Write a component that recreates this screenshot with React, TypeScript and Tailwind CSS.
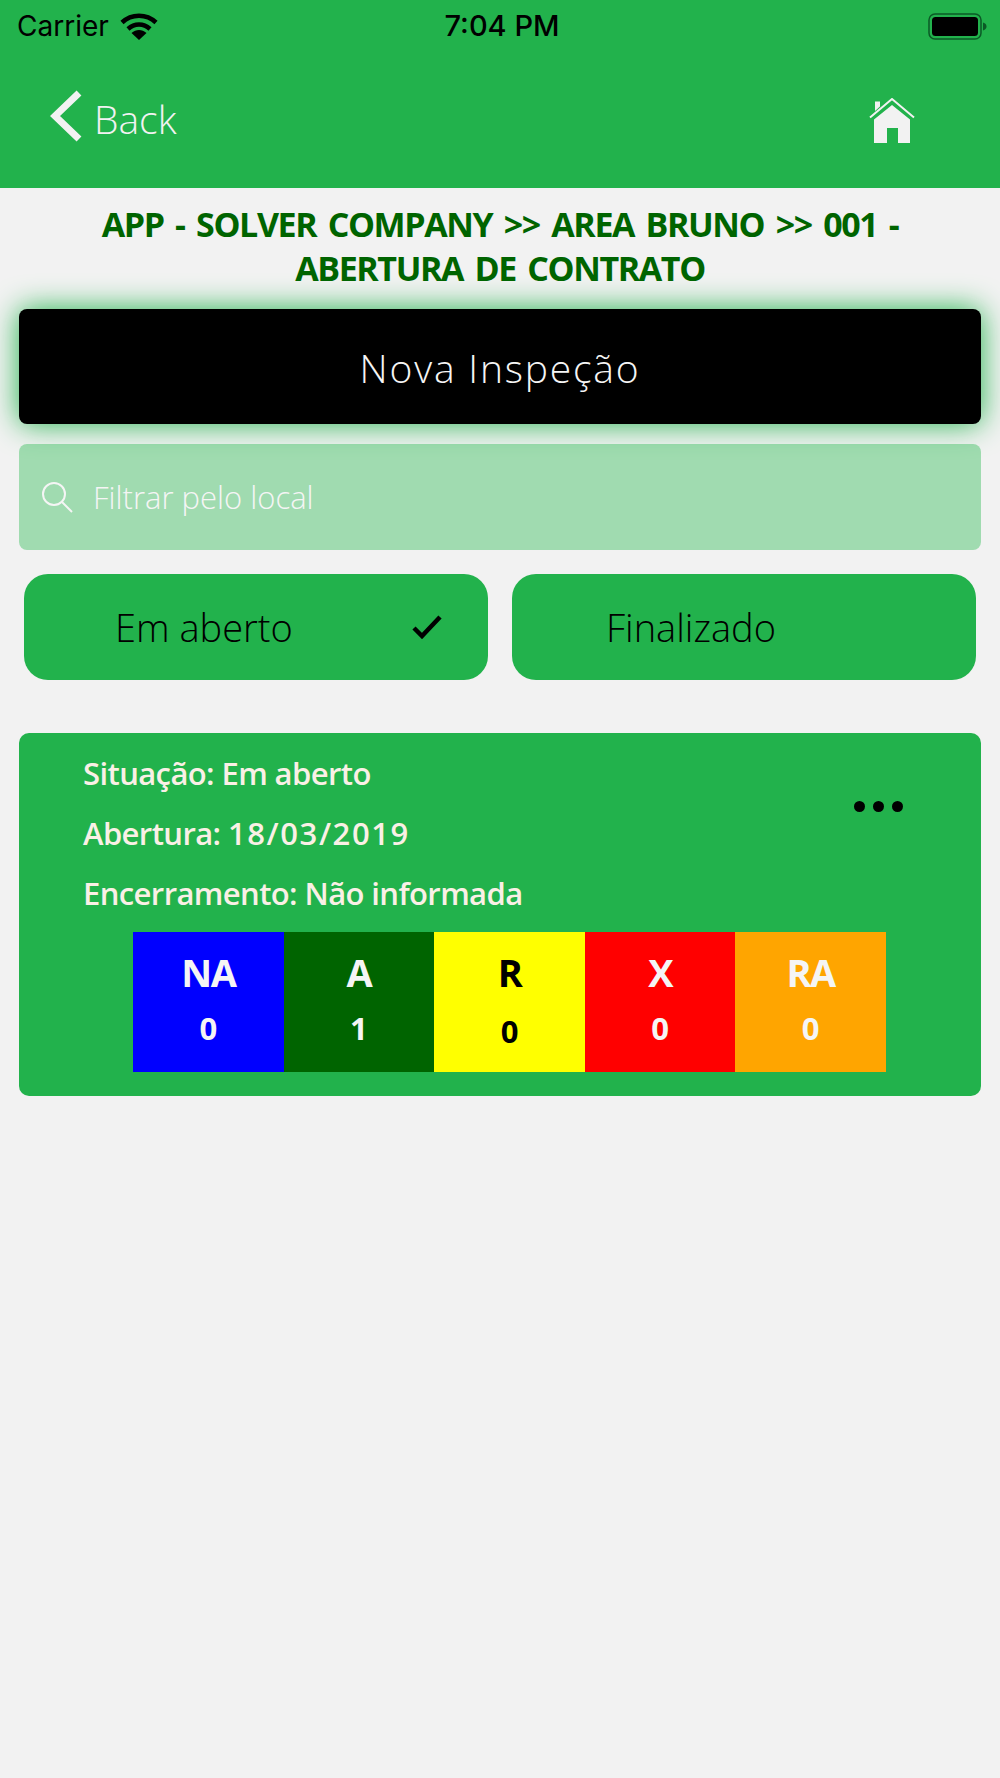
import { ReactNode } from 'react';

const cells = [
  { label: 'NA', value: '0', bg: 'bg-[#0000ff]', text: 'text-[#f5f5f5]', pad: 'pt-0' },
  { label: 'A', value: '1', bg: 'bg-[#006400]', text: 'text-[#f5f5f5]', pad: 'pt-0' },
  { label: 'R', value: '0', bg: 'bg-[#ffff00]', text: 'text-black', pad: 'pt-[3px]' },
  { label: 'X', value: '0', bg: 'bg-[#ff0000]', text: 'text-[#f5f5f5]', pad: 'pt-0' },
  { label: 'RA', value: '0', bg: 'bg-[#ffa500]', text: 'text-[#f5f5f5]', pad: 'pt-0' },
];

function WifiIcon() {
  return (
    <svg width="38" height="27" viewBox="0 0 38 27" fill="none" stroke="#000" strokeWidth="4.5">
      <path d="M2 9.5C11.5 0.5 26.5 0.5 36 9.5" />
      <path d="M8 16C14.5 10 23.5 10 30 16" />
      <path d="M19 27L11.5 20C16 16 22 16 26.5 20Z" fill="#000" stroke="none" />
    </svg>
  );
}

function BatteryIcon() {
  return (
    <svg width="59" height="27" viewBox="0 0 59 27">
      <rect x="1" y="1" width="52" height="25" rx="6" fill="none" stroke="#0b5a26" strokeWidth="1.5" />
      <rect x="4" y="4" width="46" height="19" rx="3.5" fill="#000" />
      <path d="M55 9.5C57.5 10.2 58.5 11.8 58.5 13.5C58.5 15.2 57.5 16.8 55 17.5Z" fill="#0b5a26" />
    </svg>
  );
}

function HomeIcon() {
  return (
    <svg width="46" height="46" viewBox="0 0 46 46" fill="#f2f2f2">
      <path d="M1 19.5L23 1L45 19.5" fill="none" stroke="#f2f2f2" strokeWidth="2" />
      <path d="M6 3.5H11V8.5L6 13Z" />
      <path d="M23 7L41 21.5V45H29V30H18V45H5V21.5Z" />
    </svg>
  );
}

function Chevron() {
  return (
    <svg width="32" height="52" viewBox="0 0 32 52" fill="none" stroke="#f2f2f2" strokeWidth="7">
      <path d="M29 3L5 26L29 49" />
    </svg>
  );
}

function SearchIcon() {
  return (
    <svg width="32" height="32" viewBox="0 0 32 32" fill="none" stroke="#f5f5f5" strokeWidth="2">
      <circle cx="13" cy="13" r="11" />
      <path d="M21 21L31 31" />
    </svg>
  );
}

function Toggle({ label, checked, pad }: { label: string; checked?: boolean; pad: string }): ReactNode {
  return (
    <div className={`flex h-[106px] w-[464px] items-center justify-between rounded-[24px] bg-[#22b24c] ${pad} pr-[46px]`}>
      <span className="text-[38px] font-light text-black">{label}</span>
      {checked && (
        <svg width="30" height="24" viewBox="0 0 30 24" fill="none" stroke="#000" strokeWidth="4.5">
          <path d="M2 13L10 21L28 2" />
        </svg>
      )}
    </div>
  );
}

export default function App() {
  return (
    <div className="min-h-[1778px] w-[1000px] bg-[#f2f2f2] font-['Open_Sans',sans-serif]">
      <header className="h-[188px] bg-[#22b24c]">
        <div className="flex h-[52px] items-center justify-between pl-[17px] pr-[13px] font-['Inter',sans-serif] text-[28px] text-black">
          <div className="flex w-[300px] items-center gap-[11px]">
            <span>Carrier</span>
            <WifiIcon />
          </div>
          <span className="text-[29px] font-medium">7:04 PM</span>
          <div className="flex w-[300px] justify-end">
            <BatteryIcon />
          </div>
        </div>
        <div className="flex items-center justify-between pl-[50px] pr-[85px] pt-[38px]">
          <div className="flex items-center gap-[12px]">
            <div className="-mt-[6px]">
              <Chevron />
            </div>
            <span className="text-[39px] font-light text-[#f2f2f2]">Back</span>
          </div>
          <div className="mt-[4px]">
            <HomeIcon />
          </div>
        </div>
      </header>

      <h1 className="mx-auto w-[860px] pt-[14px] text-center text-[34px] font-bold leading-[44px] tracking-[-1.4px] text-[#006400] [word-spacing:4px]">
        APP - SOLVER COMPANY &gt;&gt; AREA BRUNO &gt;&gt; 001 - ABERTURA DE CONTRATO
      </h1>

      <div className="px-[19px] pt-[19px]">
        <div className="relative z-10 flex h-[115px] items-center justify-center rounded-[8px] bg-black pt-[4px] text-[39px] font-light tracking-[1.8px] text-[#f5f5f5] shadow-[0_0_30px_#22b24c]">
          Nova Inspeção
        </div>

        <div className="mt-[20px] flex h-[106px] items-center gap-[20px] rounded-[8px] bg-[#a0dbb0] pl-[22px] text-[31px] font-light text-[#f5f5f5]">
          <SearchIcon />
          <span>Filtrar pelo local</span>
        </div>

        <div className="mt-[24px] flex justify-between px-[5px]">
          <Toggle label="Em aberto" checked pad="pl-[91px]" />
          <Toggle label="Finalizado" pad="pl-[94px]" />
        </div>

        <div className="mt-[53px] h-[363px] rounded-[10px] bg-[#22b24c] pt-[10px]">
          <div className="flex justify-between pl-[64px] pr-[78px]">
            <div className="text-[31px] font-semibold leading-[60px] tracking-[-0.6px] text-[#faf0e6]">
              <div>Situação: Em aberto</div>
              <div>
                Abertura: <span className="tracking-[1.6px]">18/03/2019</span>
              </div>
              <div>Encerramento: Não informada</div>
            </div>
            <div className="flex gap-[8px] pt-[58px]">
              <span className="size-[11px] rounded-full bg-black" />
              <span className="size-[11px] rounded-full bg-black" />
              <span className="size-[11px] rounded-full bg-black" />
            </div>
          </div>
          <div className="ml-[114px] mr-[95px] mt-[9px] grid h-[140px] grid-cols-5">
            {cells.map((c) => (
              <div key={c.label} className={`flex flex-col items-center pt-[15px] font-bold ${c.bg} ${c.text}`}>
                <span className="text-[38px] leading-[50px] tracking-[-1.5px]">{c.label}</span>
                <span className={`text-[31px] leading-[62px] ${c.pad}`}>{c.value}</span>
              </div>
            ))}
          </div>
        </div>
      </div>
    </div>
  );
}
